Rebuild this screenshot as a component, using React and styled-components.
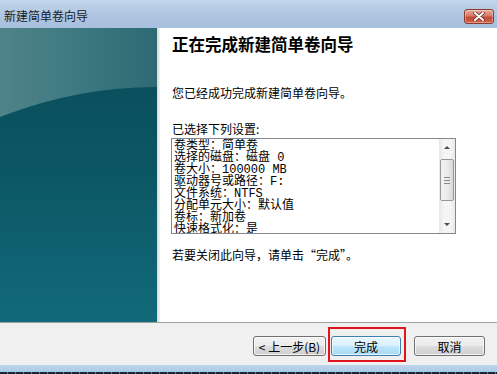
import React from "react";
import styled, { createGlobalStyle } from "styled-components";

const GlobalStyle = createGlobalStyle`
  html, body {
    margin: 0;
    padding: 0;
    background: #ffffff;
  }
  body {
    font-family: "Noto Sans CJK SC", "Liberation Sans", sans-serif;
  }
`;

const Window = styled.div`
  width: 497px;
  height: 374px;
  display: flex;
  flex-direction: column;
  overflow: hidden;
  background: #f0f0f0;
`;

const TitleBar = styled.div`
  height: 28px;
  flex: none;
  display: flex;
  align-items: flex-start;
  justify-content: space-between;
  background: linear-gradient(to bottom, #c3d6ec 0%, #afc7e2 50%, #a7c0dd 100%);
`;

const TitleText = styled.div`
  padding: 8px 0 0 4px;
  font-size: 12px;
  line-height: 16px;
  color: #1b1b1b;
`;

const CloseButton = styled.div`
  width: 30px;
  height: 15px;
  margin: 9px 3px 0 0;
  box-sizing: border-box;
  border: 1px solid #8a3b31;
  border-radius: 3px;
  display: flex;
  align-items: center;
  justify-content: center;
  background: linear-gradient(
    to bottom,
    #e9a99b 0%,
    #d77a68 45%,
    #c24a36 55%,
    #d4634c 100%
  );
  box-shadow: inset 0 0 0 1px rgba(255, 255, 255, 0.35);
`;

const Body = styled.div`
  height: 294px;
  flex: none;
  display: flex;
  background: #ffffff;
`;

const SidePanel = styled.div`
  position: relative;
  width: 157px;
  flex: none;
  overflow: hidden;
  background: linear-gradient(to right, #4f8388 0%, #3d7980 50%, #2d6a73 100%);

  &::after {
    content: "";
    position: absolute;
    left: -243px;
    top: 59px;
    width: 800px;
    height: 750px;
    border-radius: 50%;
    background: linear-gradient(
      to bottom,
      #0a4f5e 0px,
      #0c5764 90px,
      #0f6373 180px,
      #116a7a 240px
    );
  }
`;

const PanelShade = styled.div`
  width: 3px;
  flex: none;
  background: linear-gradient(to right, #d8d8d8, #f4f4f4);
`;

const Content = styled.div`
  flex: 1;
  padding: 6px 0 0 12px;
  display: flex;
  flex-direction: column;
  align-items: flex-start;
  color: #000000;
`;

const Heading = styled.h1`
  margin: 0;
  font-size: 16.5px;
  line-height: 20px;
  font-weight: 700;
`;

const Text = styled.p`
  margin: ${({ $top }) => $top}px 0 0 0;
  font-size: 12px;
  line-height: 16px;
`;

const ListBox = styled.div`
  margin: 1px 0 0 -1px;
  width: 285px;
  height: 96px;
  box-sizing: border-box;
  border: 1px solid #828790;
  display: flex;
  background: #ffffff;
`;

const ListLines = styled.div`
  flex: 1;
  padding: 1px 0 0 2px;
  overflow: hidden;
  font-family: "Liberation Mono", "Noto Sans CJK SC", monospace;
  font-size: 12px;
  line-height: 12px;
  white-space: nowrap;
`;

const ListLine = styled.div`
  height: 12px;
`;

const Scrollbar = styled.div`
  width: 16px;
  flex: none;
  display: flex;
  flex-direction: column;
  align-items: center;
  background: linear-gradient(to right, #e6e6e6, #f5f5f5 30%, #f5f5f5 70%, #e9e9e9);
`;

const ArrowButton = styled.div`
  width: 16px;
  height: 17px;
  flex: none;
  display: flex;
  align-items: center;
  justify-content: center;
`;

const Arrow = styled.div`
  width: 0;
  height: 0;
  border-left: 3.5px solid transparent;
  border-right: 3.5px solid transparent;
  ${({ $down }) =>
    $down
      ? "border-top: 3px solid #4d4d4d;"
      : "border-bottom: 3px solid #4d4d4d;"}
`;

const Thumb = styled.div`
  margin-top: 3px;
  width: 14px;
  height: 42px;
  box-sizing: border-box;
  border: 1px solid #979797;
  border-radius: 2px;
  display: flex;
  flex-direction: column;
  align-items: center;
  justify-content: center;
  gap: 2px;
  background: linear-gradient(to right, #f2f2f2 0%, #ebebeb 50%, #d9d9d9 100%);
`;

const Grip = styled.div`
  width: 6px;
  height: 1px;
  background: #8a8a8a;
`;

const Spacer = styled.div`
  flex: 1;
`;

const Separator = styled.div`
  height: 1px;
  flex: none;
  background: #a0a0a0;
`;

const Footer = styled.div`
  height: 42px;
  flex: none;
  box-sizing: border-box;
  padding: 13px 12px 0 0;
  display: flex;
  align-items: flex-start;
  justify-content: flex-end;
  background: #f0f0f0;
`;

const Button = styled.div`
  width: ${({ $w }) => $w}px;
  height: 20px;
  margin-left: ${({ $gap }) => $gap || 0}px;
  box-sizing: border-box;
  border: 1px solid ${({ $primary }) => ($primary ? "#3c7fb1" : "#707070")};
  border-radius: 3px;
  display: flex;
  align-items: center;
  justify-content: center;
  font-size: 12px;
  color: #000000;
  background: ${({ $primary }) =>
    $primary
      ? "linear-gradient(to bottom, #eaf6fd 0%, #d9f0fc 50%, #bee6fd 52%, #a7d9f5 100%)"
      : "linear-gradient(to bottom, #f2f2f2 0%, #ebebeb 50%, #dddddd 52%, #cfcfcf 100%)"};
  box-shadow: inset 0 0 0 1px rgba(255, 255, 255, 0.7);
`;

const Highlight = styled.div`
  position: relative;
  margin-left: ${({ $gap }) => $gap}px;

  &::after {
    content: "";
    position: absolute;
    top: -9px;
    left: -3px;
    right: -5px;
    bottom: -6px;
    border: 2px solid #e0141b;
    pointer-events: none;
  }
`;

const FrameBand = styled.div`
  height: 7px;
  flex: none;
  background: linear-gradient(to bottom, #bcd4ec 0%, #b3cde8 80%, #8fd0f0 100%);
`;

const TaskEdge = styled.div`
  height: 2px;
  flex: none;
  background: repeating-linear-gradient(
    to right,
    #1d2530 0px,
    #1d2530 7px,
    #6b7480 7px,
    #6b7480 8px
  );
`;

const settings = [
  "卷类型：简单卷",
  "选择的磁盘：磁盘 0",
  "卷大小：100000 MB",
  "驱动器号或路径：F:",
  "文件系统：NTFS",
  "分配单元大小：默认值",
  "卷标：新加卷",
  "快速格式化：是",
];

const CloseIcon = () => (
  <svg width="12" height="9" viewBox="0 0 12 9">
    <path
      d="M2 1 L10 8 M10 1 L2 8"
      stroke="#5a2a22"
      strokeWidth="3.4"
      strokeLinecap="round"
    />
    <path
      d="M2 1 L10 8 M10 1 L2 8"
      stroke="#ffffff"
      strokeWidth="2"
      strokeLinecap="round"
    />
  </svg>
);

export default function App() {
  return (
    <>
      <GlobalStyle />
      <Window>
        <TitleBar>
          <TitleText>新建简单卷向导</TitleText>
          <CloseButton>
            <CloseIcon />
          </CloseButton>
        </TitleBar>
        <Body>
          <SidePanel />
          <PanelShade />
          <Content>
            <Heading>正在完成新建简单卷向导</Heading>
            <Text $top={31}>您已经成功完成新建简单卷向导。</Text>
            <Text $top={20}>已选择下列设置:</Text>
            <ListBox>
              <ListLines>
                {settings.map((line) => (
                  <ListLine key={line}>{line}</ListLine>
                ))}
              </ListLines>
              <Scrollbar>
                <ArrowButton>
                  <Arrow />
                </ArrowButton>
                <Thumb>
                  <Grip />
                  <Grip />
                  <Grip />
                </Thumb>
                <Spacer />
                <ArrowButton>
                  <Arrow $down />
                </ArrowButton>
              </Scrollbar>
            </ListBox>
            <Text $top={13}>若要关闭此向导，请单击“完成”。</Text>
          </Content>
        </Body>
        <Separator />
        <Footer>
          <Button $w={73}>&lt; 上一步(B)</Button>
          <Highlight $gap={5}>
            <Button $w={70} $primary>
              完成
            </Button>
          </Highlight>
          <Button $w={71} $gap={13}>
            取消
          </Button>
        </Footer>
        <FrameBand />
        <TaskEdge />
      </Window>
    </>
  );
}
